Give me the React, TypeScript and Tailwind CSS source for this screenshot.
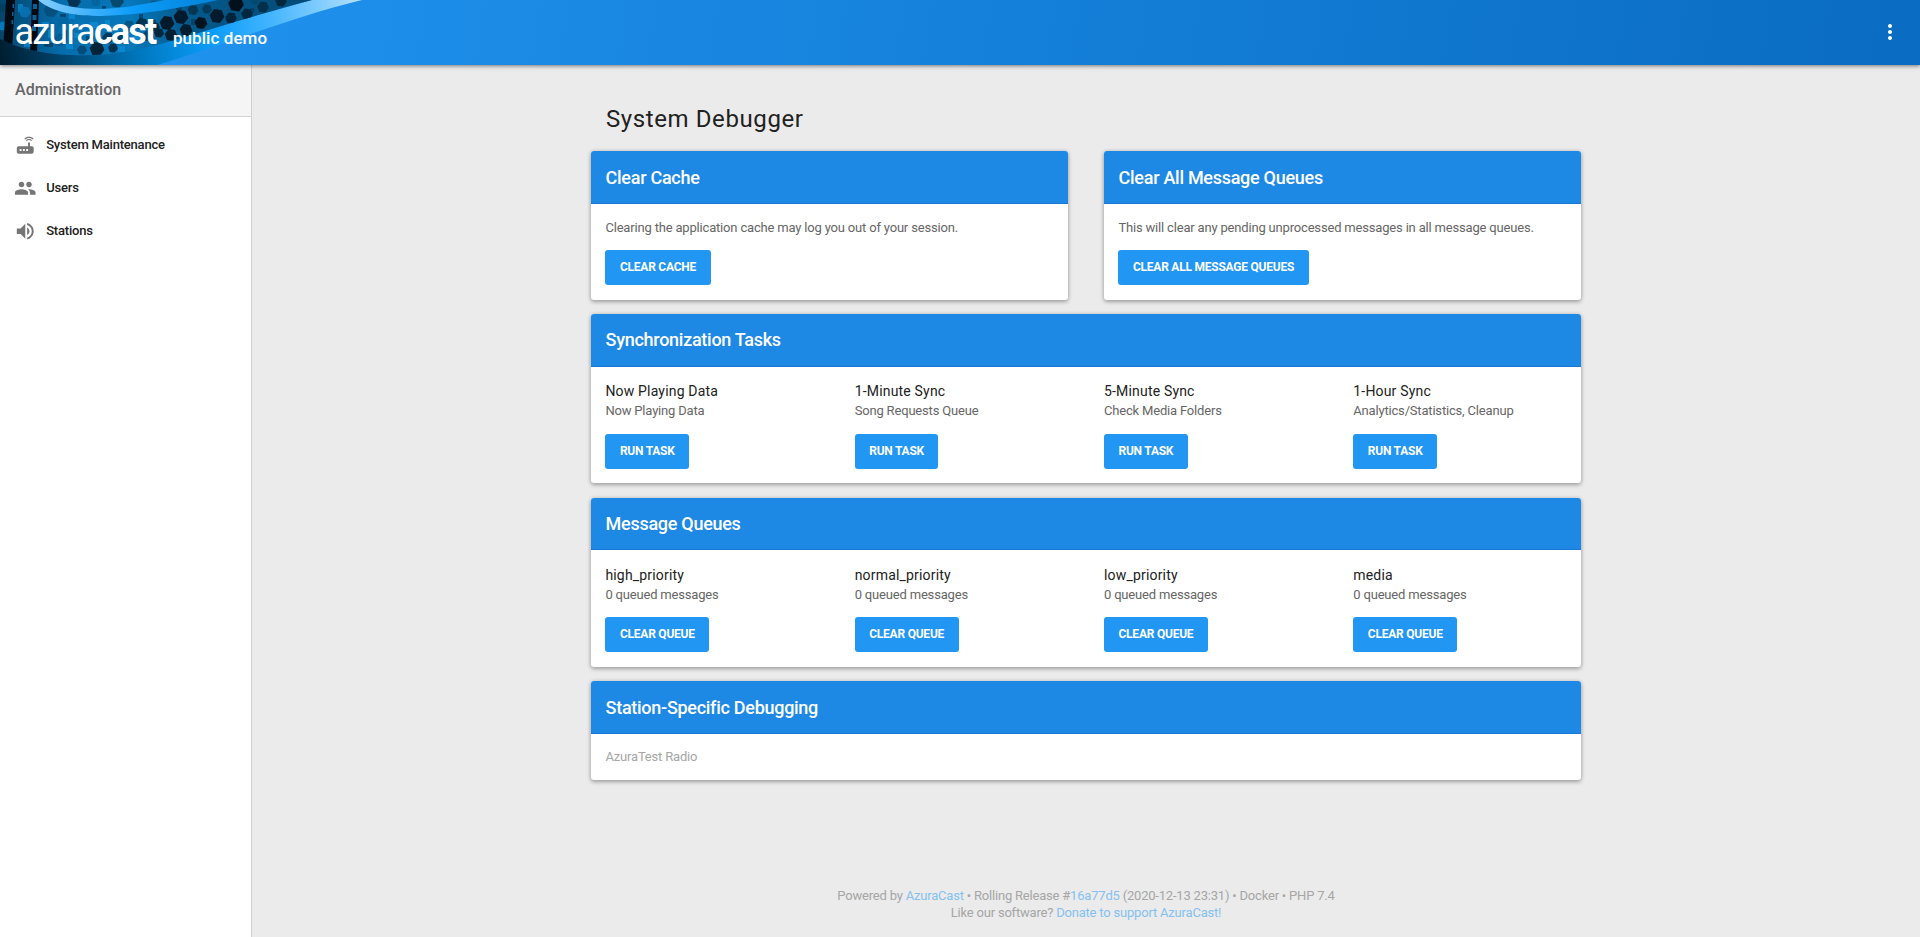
import type { ReactNode } from "react";
import { MdRouter, MdPeople, MdVolumeUp, MdMoreVert } from "react-icons/md";

const hexes: [number, number, number, string][] = [
  [51, 10, 7.5, "#04507f"],
  [74, 1, 7, "#023353"],
  [88, 9, 6, "#066fae"],
  [117, 1, 7, "#03486f"],
  [96, 2, 5, "#0466a0"],
  [63, 22, 6, "#0467a4"],
  [80, 25, 7, "#0574b5"],
  [60, 40, 7, "#035d96"],
  [97, 49, 7.5, "#022338"],
  [108, 38, 6, "#023a5c"],
  [113, 48, 5, "#02314e"],
  [82, 50, 5, "#034c79"],
  [122, 39, 5, "#023a5c"],
  [25, 12, 6, "#0770b0"],
  [22, 30, 7, "#055a8e"],
  [2, 8, 5, "#023f63"],
  [3, 26, 5, "#0477b8"],
  [154, 5, 5, "#03537f"],
  [193, 10, 5.5, "#033753"],
  [129, 26, 6, "#045789"],
  [142, 24, 6.5, "#03324e"],
  [148, 36, 6, "#04456b"],
  [155, 27, 5, "#022f4a"],
  [167, 23, 7.5, "#021a2b"],
  [181, 17, 7.5, "#021a2b"],
  [171, 35, 6.5, "#021f32"],
  [159, 33, 5, "#02263d"],
  [186, 30, 6.5, "#021c2e"],
  [201, 23, 6.5, "#021320"],
  [217, 16, 7.5, "#021a2b"],
  [207, 9, 5, "#033a59"],
  [236, 4, 8, "#02101c"],
  [247, 14, 6, "#02283f"],
  [231, 18, 6, "#02243a"],
  [263, 7, 6, "#022f4a"],
  [255, 0, 5, "#034a73"],
  [281, 1, 6, "#02283f"],
];

const hexPoints = (x: number, y: number, r: number) =>
  [0, 60, 120, 180, 240, 300]
    .map((a) => {
      const t = ((a + 8) * Math.PI) / 180;
      return `${(x + r * Math.cos(t)).toFixed(1)},${(y + r * Math.sin(t)).toFixed(1)}`;
    })
    .join(" ");

function HeaderArt() {
  return (
    <svg className="absolute left-0 top-0" width="370" height="65" viewBox="0 0 370 65" aria-hidden="true">
      <defs>
        <linearGradient id="base" x1="0" x2="310" y1="0" y2="0" gradientUnits="userSpaceOnUse">
          <stop offset="0" stopColor="#03456c" />
          <stop offset="0.2" stopColor="#066dac" />
          <stop offset="0.42" stopColor="#0678bb" />
          <stop offset="0.6" stopColor="#045a8c" />
          <stop offset="1" stopColor="#034a75" />
        </linearGradient>
        <linearGradient id="swoosh" x1="0" x2="362" y1="60" y2="0" gradientUnits="userSpaceOnUse">
          <stop offset="0" stopColor="#001d30" />
          <stop offset="0.16" stopColor="#00426a" />
          <stop offset="0.38" stopColor="#0078c0" />
          <stop offset="0.58" stopColor="#0a9dfb" />
          <stop offset="0.75" stopColor="#45b5fd" />
          <stop offset="1" stopColor="#b5e0fe" />
        </linearGradient>
        <linearGradient id="ribbon" x1="38" x2="215" y1="0" y2="0" gradientUnits="userSpaceOnUse">
          <stop offset="0" stopColor="#86cffd" />
          <stop offset="0.3" stopColor="#3fb1fc" />
          <stop offset="0.55" stopColor="#0b9bf8" />
          <stop offset="1" stopColor="#0583d8" />
        </linearGradient>
        <clipPath id="pattern">
          <path d="M0 0H312C270 11 225 25 175 40C130 53 105 56 70 55C40 54 18 48 0 39Z" />
        </clipPath>
      </defs>
      <path d="M0 37H180L312 0H362C285 19 225 45 157 65H0Z" fill="url(#swoosh)" />
      <g clipPath="url(#pattern)">
        <rect width="312" height="65" fill="url(#base)" />
        <path
          d="M18 4h5v8h-5zM42 22h7v6h-7zM24 40h8v7h-8zM48 30h5v8h-5zM69 12h6v7h-6zM90 22h8v6h-8zM105 20h5v10h-5zM115 32h7v7h-7zM66 44h7v5h-7zM74 33h5v5h-5zM118 46h7v6h-7zM134 35h6v6h-6z"
          fill="#0c90dc"
          opacity=".65"
        />
        <path
          d="M60 14h6v7h-6zM62 30h5v12h-5zM44 43h9v4h-9zM86 36h8v5h-8zM102 6h4v4h-4zM139 14h4v6h-4zM151 20h5v4h-5zM176 6h6v4h-6zM191 19h5v6h-5zM250 8h4v5h-4z"
          fill="#02395b"
          opacity=".7"
        />
        {hexes.map(([x, y, r, fill]) => (
          <polygon key={`${x}-${y}`} points={hexPoints(x, y, r)} fill={fill} />
        ))}
        <path d="M6 0H15L12 50H3ZM32 0H39L37 54H30Z" fill="#000a12" />
        <path
          d="M12.5 4h1.5v4h-1.5zM12 12h1.5v4h-1.5zM11.5 20h1.5v4h-1.5zM33 4h4v5h-4zM32.5 15h4v5h-4zM32 26h4v5h-4z"
          fill="#0b5f94"
        />
      </g>
      <path d="M38 0C53 13 78 16 101 16C142 15 180 8 218 0H165C140 5 117 9 98 9C80 9 62 6 50 0Z" fill="url(#ribbon)" />
    </svg>
  );
}

function NavItem({ icon, label }: { icon: ReactNode; label: string }) {
  return (
    <li className="flex h-[43px] items-center text-[13px] font-medium tracking-[-0.2px] text-[#212121]">
      <span className="flex w-[32px] pt-px text-[22.5px] text-[#757575]">{icon}</span>
      {label}
    </li>
  );
}

function Card({
  title,
  className,
  headClass = "h-[53px]",
  children,
}: {
  title: string;
  className: string;
  headClass?: string;
  children: ReactNode;
}) {
  return (
    <section
      className={`flex flex-col overflow-hidden rounded-[3px] bg-white shadow-[0_0_4px_rgba(0,0,0,0.14),0_2px_4px_rgba(0,0,0,0.28)] ${className}`}
    >
      <h2
        className={`flex shrink-0 items-center border-b border-[#1976d2] bg-[#1e88e5] pl-[14.6px] text-[18px] font-medium tracking-[-0.28px] text-white ${headClass}`}
      >
        {title}
      </h2>
      <div className="pl-[14.4px]">{children}</div>
    </section>
  );
}

function Button({ children }: { children: ReactNode }) {
  return (
    <button className="block h-[35px] rounded-[3px] bg-[#2196f3] px-[14.5px] pb-px text-[12px] font-bold uppercase leading-[34px] tracking-[-0.23px] text-white">
      {children}
    </button>
  );
}

function Tasks({ items, action, detailClass }: { items: [string, string][]; action: string; detailClass: string }) {
  return (
    <div className="grid grid-cols-[repeat(4,249.3px)]">
      {items.map(([name, detail]) => (
        <div key={name}>
          <h3 className="text-[14px] leading-5 tracking-[0.18px] text-[#212121]">{name}</h3>
          <p className={`leading-5 text-[#666] ${detailClass}`}>{detail}</p>
          <Button>{action}</Button>
        </div>
      ))}
    </div>
  );
}

export default function App() {
  return (
    <div className="flex h-[937px] flex-col overflow-hidden bg-[#ebebeb] font-['Roboto',sans-serif] text-[13px] tracking-[-0.18px]">
      <header className="relative z-10 flex h-[65px] shrink-0 items-center justify-between bg-[linear-gradient(100deg,#2196f3,#0a6cc2)] tracking-normal shadow-[0_1px_4px_rgba(0,0,0,0.5)]">
        <HeaderArt />
        <div className="relative flex items-baseline pl-[14.5px] text-white">
          <span className="text-[36px] font-normal leading-[65px] tracking-[-1.8px]">
            azura<b className="font-bold">cast</b>
          </span>
          <span className="ml-[17.5px] text-[17px] font-medium tracking-[0.08px]">public demo</span>
        </div>
        <MdMoreVert className="mb-px mr-[18px] size-[24px] text-white" />
      </header>
      <div className="flex flex-1">
        <aside className="w-[252px] shrink-0 border-r border-[#cfcfcf] bg-white">
          <div className="h-[52px] border-b border-[#d4d4d4] bg-[#f5f5f5] pl-[15px] pt-[13px] text-[16px] font-medium leading-6 tracking-[0.05px] text-[#666]">
            Administration
          </div>
          <ul className="pl-[14.2px] pt-[6px]">
            <NavItem icon={<MdRouter />} label="System Maintenance" />
            <NavItem icon={<MdPeople />} label="Users" />
            <NavItem icon={<MdVolumeUp />} label="Stations" />
          </ul>
        </aside>
        <div className="flex flex-1 flex-col items-center justify-between">
          <main className="w-[990px]">
            <h1 className="pl-[15px] pt-[38px] text-[24px] leading-8 tracking-[0.6px] text-[#212121]">System Debugger</h1>
            <div className="mt-[16px] flex justify-between">
              <Card title="Clear Cache" className="h-[149px] w-[477px]">
                <p className="pb-[12px] pt-[14px] leading-5 text-[#666]">
                  Clearing the application cache may log you out of your session.
                </p>
                <Button>Clear Cache</Button>
              </Card>
              <Card title="Clear All Message Queues" className="h-[149px] w-[477px]">
                <p className="pb-[12px] pt-[14px] leading-5 text-[#666]">
                  This will clear any pending unprocessed messages in all message queues.
                </p>
                <Button>Clear All Message Queues</Button>
              </Card>
            </div>
            <Card title="Synchronization Tasks" className="mt-[14px] h-[169px]" headClass="mb-[14px] h-[53px] pb-[2px]">
              <Tasks
                action="Run Task"
                detailClass="mb-[13px]"
                items={[
                  ["Now Playing Data", "Now Playing Data"],
                  ["1-Minute Sync", "Song Requests Queue"],
                  ["5-Minute Sync", "Check Media Folders"],
                  ["1-Hour Sync", "Analytics/Statistics, Cleanup"],
                ]}
              />
            </Card>
            <Card title="Message Queues" className="mt-[15px] h-[169px]" headClass="mb-[15px] h-[52px] pb-px">
              <Tasks
                action="Clear Queue"
                detailClass="mb-[12px]"
                items={[
                  ["high_priority", "0 queued messages"],
                  ["normal_priority", "0 queued messages"],
                  ["low_priority", "0 queued messages"],
                  ["media", "0 queued messages"],
                ]}
              />
            </Card>
            <Card title="Station-Specific Debugging" className="mt-[14px] h-[99px]">
              <p className="pt-[13px] leading-5 text-[#a6a6a6]">AzuraTest Radio</p>
            </Card>
          </main>
          <footer className="pb-[16px] text-center leading-[17px] tracking-[-0.2px] text-[#a6a6a6]">
            <p>
              Powered by <a className="text-[#85c1f0]">AzuraCast</a> • Rolling Release #
              <a className="text-[#85c1f0]">16a77d5</a> (2020-12-13 23:31) • Docker • PHP 7.4
            </p>
            <p>
              Like our software? <a className="text-[#85c1f0]">Donate to support AzuraCast!</a>
            </p>
          </footer>
        </div>
      </div>
    </div>
  );
}
